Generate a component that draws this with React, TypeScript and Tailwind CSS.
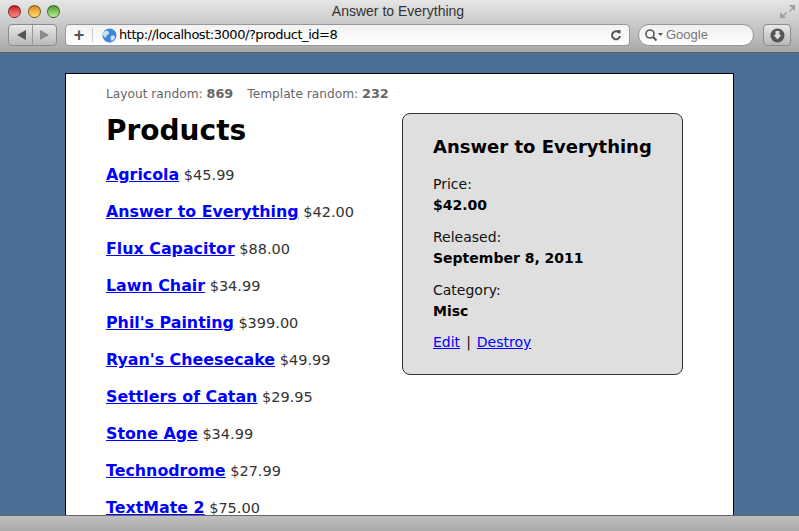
const products = [
  { name: 'Agricola', price: '$45.99' },
  { name: 'Answer to Everything', price: '$42.00' },
  { name: 'Flux Capacitor', price: '$88.00' },
  { name: 'Lawn Chair', price: '$34.99' },
  { name: "Phil's Painting", price: '$399.00' },
  { name: "Ryan's Cheesecake", price: '$49.99' },
  { name: 'Settlers of Catan', price: '$29.95' },
  { name: 'Stone Age', price: '$34.99' },
  { name: 'Technodrome', price: '$27.99' },
  { name: 'TextMate 2', price: '$75.00' },
];

function Light({ color }: { color: string }) {
  return <span className={`w-[13px] h-[13px] rounded-full border border-black/50 ${color}`} />;
}

function Toolbar() {
  return (
    <div className="h-[53px] shrink-0 border-b border-[#5e5e5e] bg-gradient-to-b from-[#e6e6e6] to-[#a9a9a9] flex flex-col px-2">
      <div className="h-[23px] flex items-center relative">
        <div className="flex gap-[6.500px] shrink-0">
          <Light color="bg-gradient-to-b from-[#c8141e] to-[#ff8a8a]" />
          <Light color="bg-gradient-to-b from-[#e08a10] to-[#ffdc70]" />
          <Light color="bg-gradient-to-b from-[#4fa030] to-[#b4f090]" />
        </div>
        <span className="flex-1 text-center text-[14px] text-[#333] font-['Liberation_Sans',sans-serif] pr-[44px]">
          Answer to Everything
        </span>
        <svg width="16" height="16" viewBox="0 0 16 16" className="mr-[-5px] text-[#a0a0a0]" fill="currentColor">
          <path d="M9 1h6v6l-2-2-3 3-1-1 3-3zM1 9l2 2 3-3 1 1-3 3 2 2H0V9z" />
        </svg>
      </div>
      <div className="flex items-center mt-[1px] h-[22px]">
        <div className="w-[49px] h-[22px] shrink-0 rounded-[4px] border border-[#8c8c8c] bg-gradient-to-b from-[#e8e8e8] to-[#b9b9b9] flex items-center">
          <div className="w-[24px] flex justify-center border-r border-[#9a9a9a] h-full items-center">
            <span className="w-0 h-0 border-y-[5px] border-y-transparent border-r-[9px] border-r-[#555] ml-[2px]" />
          </div>
          <div className="flex-1 flex justify-center">
            <span className="w-0 h-0 border-y-[5px] border-y-transparent border-l-[9px] border-l-[#8a8a8a]" />
          </div>
        </div>
        <div className="w-[565px] h-[22px] shrink-0 ml-[8px] rounded-[4px] border border-[#999] bg-gradient-to-b from-[#f2f2f2] to-[#ffffff] flex items-center">
          <span className="w-[26px] text-center text-[#555] text-[18px] font-bold leading-none font-['Liberation_Sans',sans-serif]">+</span>
          <span className="w-px h-[14px] bg-[#ccc]" />
          <svg width="15" height="15" viewBox="0 0 15 15" className="ml-[9px]">
            <circle cx="7.5" cy="7.5" r="7" fill="#3f86d6" />
            <path d="M3 3c2-1 4 0 4 2S4 7 4 9 2 9 1 7s1-3 2-4zM9 8c2-1 4 0 4 1s-2 4-3 4-2-4-1-5z" fill="#c9e2f5" />
          </svg>
          <span className="ml-[2px] text-[13px] text-black font-['DejaVu_Sans',sans-serif] tracking-[-0.46px]">
            http://localhost:3000/?product_id=8
          </span>
          <svg width="12" height="12" viewBox="0 0 12 12" className="ml-auto mr-[7px] text-[#555]" fill="none" stroke="currentColor" strokeWidth="2">
            <path d="M9.5 4.2A4 4 0 1 0 10 7" />
            <path d="M7 1l3.5 0 0 4z" fill="currentColor" stroke="none" />
          </svg>
        </div>
        <div className="w-[116px] h-[22px] shrink-0 ml-[8px] rounded-full border border-[#999] bg-gradient-to-b from-[#efefef] to-[#ffffff] flex items-center pl-[5px]">
          <svg width="20" height="14" viewBox="0 0 20 14" fill="none" stroke="#555" strokeWidth="1.6">
            <circle cx="6" cy="6" r="4" />
            <path d="M9 9l3.5 3.5" strokeWidth="2" />
            <path d="M14 5h5l-2.5 3z" fill="#555" stroke="none" />
          </svg>
          <span className="ml-[2px] text-[13px] text-[#777] font-['Liberation_Sans',sans-serif]">Google</span>
        </div>
        <div className="w-[28px] h-[22px] shrink-0 ml-[9px] rounded-[4px] border border-[#8c8c8c] bg-gradient-to-b from-[#e8e8e8] to-[#b9b9b9] flex items-center justify-center">
          <svg width="15" height="15" viewBox="0 0 15 15">
            <circle cx="7.5" cy="7.5" r="7" fill="#555" />
            <path d="M5.5 3h4v4h2l-4 4.5L3.500 7h2z" fill="#ddd" />
          </svg>
        </div>
      </div>
    </div>
  );
}

function Detail({ label, value }: { label: string; value: string }) {
  return (
    <div className="mb-[11px]">
      <div className="h-[21px] leading-[21px]">{label}</div>
      <div className="h-[21px] leading-[21px] font-bold text-black">{value}</div>
    </div>
  );
}

export default function App() {
  return (
    <div className="w-[799px] h-[531px] overflow-hidden flex flex-col bg-[#4b7096] font-['DejaVu_Sans',sans-serif]">
      <Toolbar />
      <div className="flex-1 min-h-0 overflow-hidden pt-[20px] px-[65px]">
        <div className="w-[669px] min-h-[600px] bg-white border border-black px-[40px] pt-[11px] text-[#333]">
          <div className="text-[12.2px] leading-[18px] text-[#666]">
            Layout random: <b className="text-[12.8px]">869</b>
            <span className="ml-[14px]">Template random: <b className="text-[12.8px]">232</b></span>
          </div>
          <div className="flex justify-between mt-[8px]">
            <div>
              <h1 className="text-[28px] leading-[40px] font-bold text-black mb-[12px]">Products</h1>
              <div className="flex flex-col gap-[13px]">
                {products.map((p) => (
                  <div key={p.name} className="h-[24px] leading-[24px] text-[14.5px] whitespace-nowrap">
                    <a href="#" className="text-[15.85px] font-bold text-[#0000ff] underline">{p.name}</a> {p.price}
                  </div>
                ))}
              </div>
            </div>
            <div className="w-[281px] h-[262px] mr-[10px] mt-[2px] shrink-0 bg-[#dfdfdf] border border-[#333] rounded-[8px] pl-[30px] pt-[21px] text-[14px] text-[#111]">
              <h2 className="text-[18px] leading-[24px] font-bold text-black mb-[15px]">Answer to Everything</h2>
              <Detail label="Price:" value="$42.00" />
              <Detail label="Released:" value="September 8, 2011" />
              <Detail label="Category:" value="Misc" />
              <div className="leading-[21px] -mt-px">
                <a href="#" className="text-[#0000ff] underline">Edit</a>
                <span className="mx-[6px]">|</span>
                <a href="#" className="text-[#0000ff] underline">Destroy</a>
              </div>
            </div>
          </div>
        </div>
      </div>
      <div className="h-[16px] shrink-0 border-t border-[#666] bg-gradient-to-b from-[#c0c0c0] to-[#a9a9a9] relative z-10" />
    </div>
  );
}
